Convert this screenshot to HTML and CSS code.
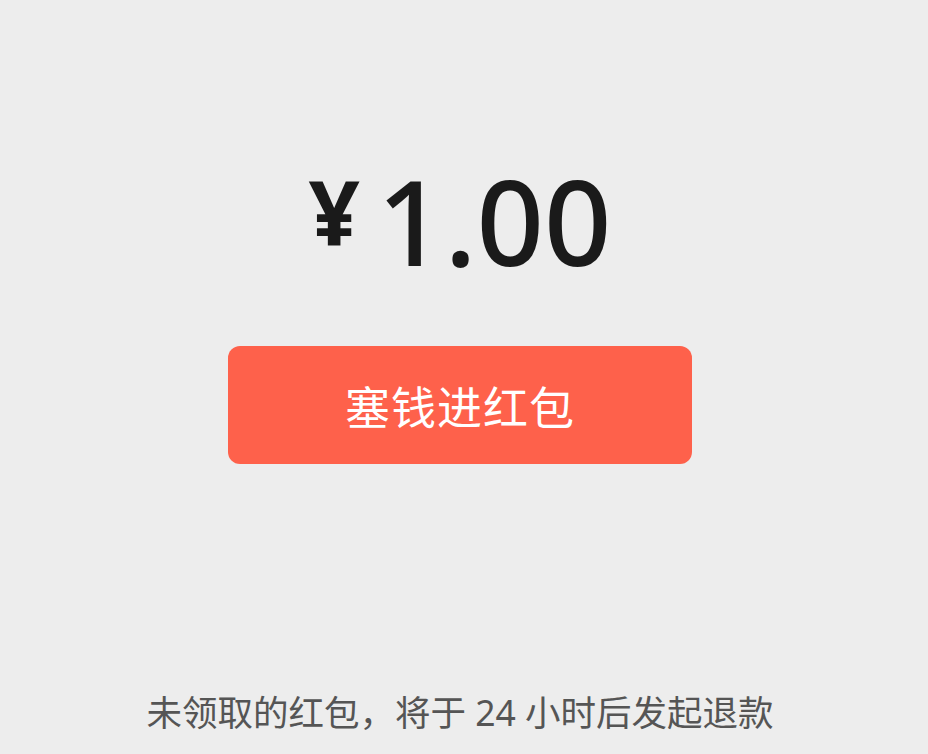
FILE: index.html
```html
<!DOCTYPE html>
<html lang="zh-CN">
<head>
    <meta charset="UTF-8">
    <meta name="viewport" content="width=device-width, initial-scale=1.0">
    <title>塞钱进红包</title>
    <link rel="stylesheet" href="styles.css">
</head>
<body>

    <div class="page">
        <div class="amount">
            <span class="currency">¥</span>
            <span class="value">1.00</span>
        </div>

        <button class="send-btn">塞钱进红包</button>

        <p class="notice">未领取的红包，将于 24 小时后发起退款</p>
    </div>

</body>
</html>
```

FILE: styles.css
```css
body {
    margin: 0;
    background-color: #ededed;
    font-family: "Noto Sans", "Noto Sans CJK SC", sans-serif;
}
.page {
    height: 754px;
    display: flex;
    flex-direction: column;
    align-items: center;
    box-sizing: border-box;
    padding: 162px 8px 18px 0;
}
.amount {
    display: flex;
    align-items: flex-start;
    color: #1a1a1a;
    line-height: 1;
}
.currency {
    font-size: 90px;
    font-weight: 700;
    margin-top: 4px;
    margin-right: 17px;
}
.value {
    font-size: 118px;
    font-weight: 500;
}
.send-btn {
    margin-top: 66px;
    width: 464px;
    height: 118px;
    border: none;
    border-radius: 12px;
    background-color: #fe614b;
    color: #fff;
    font-family: "Noto Sans CJK SC", sans-serif;
    font-size: 45px;
    letter-spacing: 1px;
    cursor: pointer;
}
.notice {
    margin: auto 0 0;
    color: #555;
    font-size: 35.5px;
    font-family: "Noto Sans", "Noto Sans CJK SC", sans-serif;
}
```
